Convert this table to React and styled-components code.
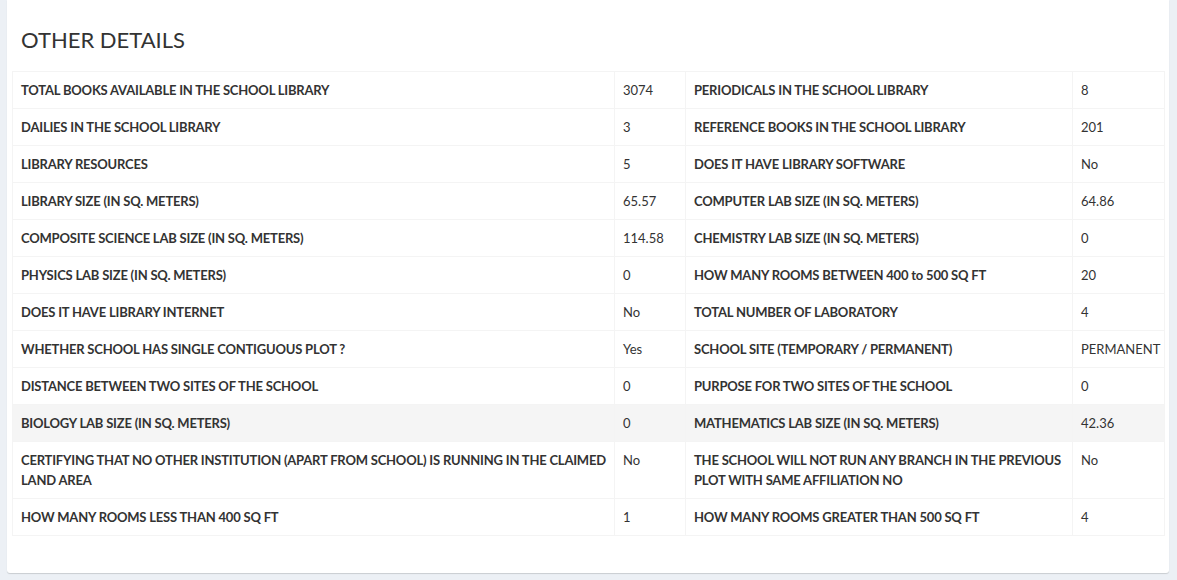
import styled, { createGlobalStyle } from "styled-components";

const GlobalStyle = createGlobalStyle`
  body {
    margin: 0;
    background: #ecf0f5;
    font-family: "Lato", "Liberation Sans", sans-serif;
    color: #333;
  }
`;

const Page = styled.div`
  padding: 0 8px 7px 7px;
`;

const Card = styled.div`
  background: #fff;
  border-radius: 0 0 3px 3px;
  box-shadow: 0 1px 1px rgba(0, 0, 0, 0.15);
  padding: 0 4px 37px 5px;
`;

const Title = styled.h3`
  margin: 0;
  padding: 24px 9px 16px;
  font-size: 22px;
  font-weight: 400;
  line-height: 31px;
  color: #333;
`;

const Table = styled.table`
  width: 1153px;
  border-collapse: collapse;
  table-layout: fixed;
  border: 1px solid #f4f4f4;
`;

const Row = styled.tr`
  background: ${props => (props.highlight ? "#f5f5f5" : "#fff")};
`;

const Cell = styled.td`
  border: 1px solid #f4f4f4;
  padding: 8px;
  font-size: 13px;
  line-height: 20px;
  vertical-align: top;
  font-weight: ${props => (props.label ? 700 : 400)};
  letter-spacing: ${props => (props.label ? "-0.2px" : "0")};
  color: #333;
`;

const rows = [
  ["TOTAL BOOKS AVAILABLE IN THE SCHOOL LIBRARY", "3074", "PERIODICALS IN THE SCHOOL LIBRARY", "8"],
  ["DAILIES IN THE SCHOOL LIBRARY", "3", "REFERENCE BOOKS IN THE SCHOOL LIBRARY", "201"],
  ["LIBRARY RESOURCES", "5", "DOES IT HAVE LIBRARY SOFTWARE", "No"],
  ["LIBRARY SIZE (IN SQ. METERS)", "65.57", "COMPUTER LAB SIZE (IN SQ. METERS)", "64.86"],
  ["COMPOSITE SCIENCE LAB SIZE (IN SQ. METERS)", "114.58", "CHEMISTRY LAB SIZE (IN SQ. METERS)", "0"],
  ["PHYSICS LAB SIZE (IN SQ. METERS)", "0", "HOW MANY ROOMS BETWEEN 400 to 500 SQ FT", "20"],
  ["DOES IT HAVE LIBRARY INTERNET", "No", "TOTAL NUMBER OF LABORATORY", "4"],
  ["WHETHER SCHOOL HAS SINGLE CONTIGUOUS PLOT ?", "Yes", "SCHOOL SITE (TEMPORARY / PERMANENT)", "PERMANENT"],
  ["DISTANCE BETWEEN TWO SITES OF THE SCHOOL", "0", "PURPOSE FOR TWO SITES OF THE SCHOOL", "0"],
  ["BIOLOGY LAB SIZE (IN SQ. METERS)", "0", "MATHEMATICS LAB SIZE (IN SQ. METERS)", "42.36", true],
  [
    "CERTIFYING THAT NO OTHER INSTITUTION (APART FROM SCHOOL) IS RUNNING IN THE CLAIMED LAND AREA",
    "No",
    "THE SCHOOL WILL NOT RUN ANY BRANCH IN THE PREVIOUS PLOT WITH SAME AFFILIATION NO",
    "No",
  ],
  ["HOW MANY ROOMS LESS THAN 400 SQ FT", "1", "HOW MANY ROOMS GREATER THAN 500 SQ FT", "4"],
];

function App() {
  return (
    <Page>
      <GlobalStyle />
      <Card>
        <Title>OTHER DETAILS</Title>
        <Table>
          <colgroup>
            <col style={{ width: 602 }} />
            <col style={{ width: 71 }} />
            <col style={{ width: 387 }} />
            <col style={{ width: 92 }} />
          </colgroup>
          <tbody>
            {rows.map(([l1, v1, l2, v2, hl]) => (
              <Row key={l1} highlight={hl}>
                <Cell label>{l1}</Cell>
                <Cell>{v1}</Cell>
                <Cell label>{l2}</Cell>
                <Cell>{v2}</Cell>
              </Row>
            ))}
          </tbody>
        </Table>
      </Card>
    </Page>
  );
}

export default App;
